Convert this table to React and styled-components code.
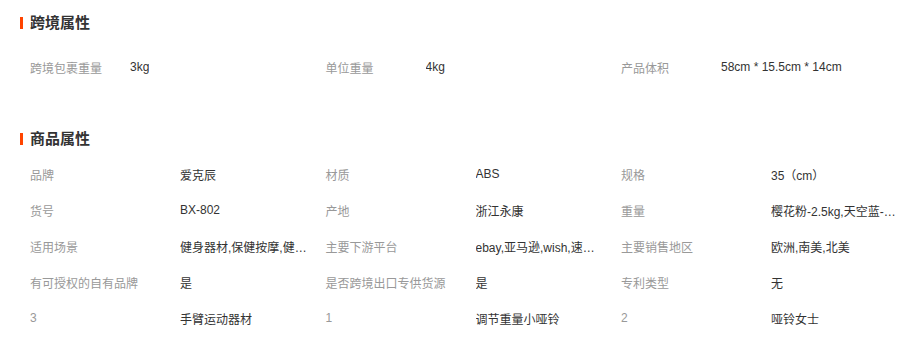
import React from 'react'
import styled, { createGlobalStyle } from 'styled-components'

const GlobalStyle = createGlobalStyle`
  body {
    margin: 0;
    background: #fff;
    font-family: "Liberation Sans", "Noto Sans CJK SC", sans-serif;
  }
`;

const crossBorder = [
  { label: '跨境包裹重量', value: '3kg' },
  { label: '单位重量', value: '4kg' },
  { label: '产品体积', value: '58cm * 15.5cm * 14cm' },
];

const product = [
  { label: '品牌', value: '爱克辰' },
  { label: '材质', value: 'ABS' },
  { label: '规格', value: '35（cm）' },
  { label: '货号', value: 'BX-802' },
  { label: '产地', value: '浙江永康' },
  { label: '重量', value: '樱花粉-2.5kg,天空蓝-3kg,薄荷绿-4kg' },
  { label: '适用场景', value: '健身器材,保健按摩,健身房' },
  { label: '主要下游平台', value: 'ebay,亚马逊,wish,速卖通' },
  { label: '主要销售地区', value: '欧洲,南美,北美' },
  { label: '有可授权的自有品牌', value: '是' },
  { label: '是否跨境出口专供货源', value: '是' },
  { label: '专利类型', value: '无' },
  { label: '3', value: '手臂运动器材' },
  { label: '1', value: '调节重量小哑铃' },
  { label: '2', value: '哑铃女士' },
];

const App = () => {
  return (
    <Page>
      <GlobalStyle />
      <Section>
        <Title>跨境属性</Title>
        <Grid top={16}>
          {crossBorder.map(item => (
            <Cell key={item.label}>
              <Label width={100}>{item.label}</Label>
              <Value>{item.value}</Value>
            </Cell>
          ))}
        </Grid>
      </Section>
      <Section top={44}>
        <Title>商品属性</Title>
        <Grid top={7}>
          {product.map(item => (
            <Cell key={item.label}>
              <Label width={150}>{item.label}</Label>
              <Value>{item.value}</Value>
            </Cell>
          ))}
        </Grid>
      </Section>
    </Page>
  )
}

const Page = styled.div`
  width: 910px;
  height: 356px;
  padding: 13px 0 0 20px;
  box-sizing: border-box;
  overflow: hidden;
`;

const Section = styled.section`
  margin-top: ${props => props.top || 0}px;
`;

const Title = styled.h3`
  display: flex;
  align-items: center;
  gap: 7px;
  margin: 0;
  height: 20px;
  line-height: 20px;
  font-size: 15px;
  font-weight: 700;
  color: #333;
  &::before {
    content: '';
    width: 3px;
    height: 12px;
    background: #ff4400;
  }
`;

const Grid = styled.div`
  display: grid;
  grid-template-columns: repeat(3, 295.5px);
  margin-top: ${props => props.top || 0}px;
  padding-left: 10px;
`;

const Cell = styled.div`
  display: flex;
  align-items: center;
  height: 36px;
  font-size: 12px;
`;

const Label = styled.span`
  flex: 0 0 ${props => props.width}px;
  color: #999;
  white-space: nowrap;
`;

const Value = styled.span`
  max-width: 130px;
  color: #333;
  white-space: nowrap;
  overflow: hidden;
  text-overflow: ellipsis;
`;

export default App;
